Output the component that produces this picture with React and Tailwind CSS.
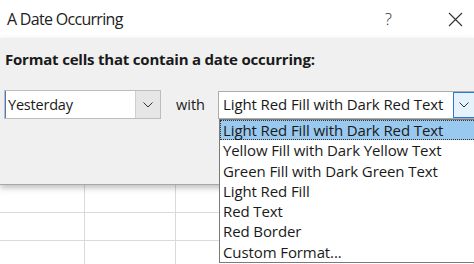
import { useState } from "react";

const OPTIONS = [
	"Light Red Fill with Dark Red Text",
	"Yellow Fill with Dark Yellow Text",
	"Green Fill with Dark Green Text",
	"Light Red Fill",
	"Red Text",
	"Red Border",
	"Custom Format...",
];

const Chevron = () => (
	<svg width="10" height="6" viewBox="0 0 10 6" fill="none" stroke="#333" strokeWidth="1">
		<path d="M0.5 0.5 L5 5 L9.5 0.5" />
	</svg>
);

const App = () => {
	const [selected] = useState(0);

	return (
		<div className="relative w-[474px] h-[264px] overflow-hidden bg-white text-[#1a1a1a] font-['Open_Sans',sans-serif]">
			{/* title bar */}
			<div className="flex h-[38px] items-center bg-white">
				<span className="pl-[7px] text-[16px] font-normal tracking-[-0.7px] text-[#222]">A Date Occurring</span>
				<span className="ml-auto mr-[56px] text-[17px] font-light text-[#333]">?</span>
				<svg className="mr-[11px]" width="15" height="15" viewBox="0 0 15 15" stroke="#333" strokeWidth="1.1">
					<path d="M1 1 L14 14 M14 1 L1 14" />
				</svg>
			</div>

			{/* dialog body */}
			<div className="relative z-10 h-[147px] border-b border-[#a8a8a8] bg-[#f0f0f0] shadow-[0_3px_6px_rgba(0,0,0,0.25)]">
				<div className="pl-[5px] pt-[11px] text-[15px] font-bold leading-[20px] tracking-[-0.2px]">
					Format cells that contain a date occurring:
				</div>
				<div className="mt-[21px] flex items-center">
					<div className="ml-[4px] flex h-[29px] w-[157px] shrink-0 border border-[#bdbdbd] bg-white">
						<div className="flex flex-1 items-center border-l border-[#4a7cc2] pl-[2px] text-[14.5px] tracking-[-0.2px]">Yesterday</div>
						<div className="flex w-[25px] items-center justify-center border-l border-[#cfcfcf] bg-[#e6e6e6]">
							<Chevron />
						</div>
					</div>
					<span className="ml-[15px] shrink-0 text-[14.5px]">with</span>
					<div className="ml-[13px] flex h-[28px] w-[258px] shrink-0 border border-[#adadad] bg-white">
						<div className="flex min-w-0 flex-1 items-center overflow-hidden whitespace-nowrap pl-[4px] text-[15px] tracking-[-0.1px]">Light Red Fill with Dark Red Text</div>
						<div className="flex w-[22px] shrink-0 items-center justify-center border border-[#2a78d4] bg-[#e5f1fb]">
							<Chevron />
						</div>
					</div>
				</div>
			</div>

			{/* worksheet behind */}
			<div className="grid grid-cols-[85px_91px_1fr] grid-rows-[28px_28px_28px]">
				{Array.from({ length: 9 }).map((_, i) => (
					<div key={i} className="border-r border-b border-[#dadada]" />
				))}
			</div>

			{/* dropdown list */}
			<ul className="absolute left-[219px] top-[119px] z-20 w-[260px] border border-[#7a7a7a] bg-white text-[15px] tracking-[-0.1px] whitespace-nowrap">
				{OPTIONS.map((o, i) => (
					<li
						key={o}
						className={
							i === selected
								? "h-[20.3px] border border-dotted border-[#333] bg-[#99c9ef] pl-[2px] leading-[18px]"
								: "h-[20.3px] pl-[3px] leading-[20px]"
						}>
						{o}
					</li>
				))}
			</ul>
		</div>
	);
};

export default App;
